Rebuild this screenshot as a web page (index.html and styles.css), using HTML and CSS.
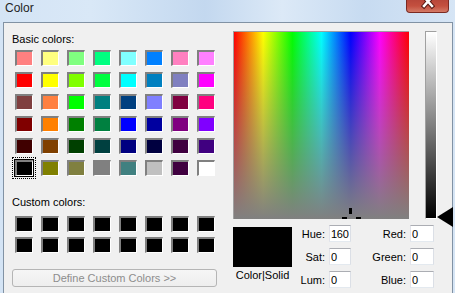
FILE: index.html
```html
<!DOCTYPE html>
<html>
<head>
  <meta charset="UTF-8">
  <link rel="stylesheet" href="styles.css">
</head>
<body>
  <div class="window">
    <div class="titlebar">
      <span class="title">Color</span>
      <div class="close-button">
        <svg width="43" height="13" viewBox="0 0 43 13">
          <path d="M18 -3 L26 6 M26 -3 L18 6" stroke="#5a1a14" stroke-width="4.5" stroke-linecap="square"/>
          <path d="M18 -3 L26 6 M26 -3 L18 6" stroke="#ffffff" stroke-width="2.5" stroke-linecap="square"/>
        </svg>
      </div>
    </div>

    <div class="client">
      <div class="left-panel">
        <div class="label">Basic colors:</div>
        <div class="swatch-grid basic">
          <div class="swatch" style="background:#ff8080"></div>
          <div class="swatch" style="background:#ffff80"></div>
          <div class="swatch" style="background:#80ff80"></div>
          <div class="swatch" style="background:#00ff80"></div>
          <div class="swatch" style="background:#80ffff"></div>
          <div class="swatch" style="background:#0080ff"></div>
          <div class="swatch" style="background:#ff80c0"></div>
          <div class="swatch" style="background:#ff80ff"></div>

          <div class="swatch" style="background:#ff0000"></div>
          <div class="swatch" style="background:#ffff00"></div>
          <div class="swatch" style="background:#80ff00"></div>
          <div class="swatch" style="background:#00ff40"></div>
          <div class="swatch" style="background:#00ffff"></div>
          <div class="swatch" style="background:#0080c0"></div>
          <div class="swatch" style="background:#8080c0"></div>
          <div class="swatch" style="background:#ff00ff"></div>

          <div class="swatch" style="background:#804040"></div>
          <div class="swatch" style="background:#ff8040"></div>
          <div class="swatch" style="background:#00ff00"></div>
          <div class="swatch" style="background:#008080"></div>
          <div class="swatch" style="background:#004080"></div>
          <div class="swatch" style="background:#8080ff"></div>
          <div class="swatch" style="background:#800040"></div>
          <div class="swatch" style="background:#ff0080"></div>

          <div class="swatch" style="background:#800000"></div>
          <div class="swatch" style="background:#ff8000"></div>
          <div class="swatch" style="background:#008000"></div>
          <div class="swatch" style="background:#008040"></div>
          <div class="swatch" style="background:#0000ff"></div>
          <div class="swatch" style="background:#0000a0"></div>
          <div class="swatch" style="background:#800080"></div>
          <div class="swatch" style="background:#8000ff"></div>

          <div class="swatch" style="background:#400000"></div>
          <div class="swatch" style="background:#804000"></div>
          <div class="swatch" style="background:#004000"></div>
          <div class="swatch" style="background:#004040"></div>
          <div class="swatch" style="background:#000080"></div>
          <div class="swatch" style="background:#000040"></div>
          <div class="swatch" style="background:#400040"></div>
          <div class="swatch" style="background:#400080"></div>

          <div class="swatch selected" style="background:#000000"></div>
          <div class="swatch" style="background:#808000"></div>
          <div class="swatch" style="background:#808040"></div>
          <div class="swatch" style="background:#808080"></div>
          <div class="swatch" style="background:#408080"></div>
          <div class="swatch" style="background:#c0c0c0"></div>
          <div class="swatch" style="background:#400040"></div>
          <div class="swatch" style="background:#ffffff"></div>
        </div>

        <div class="label custom-label">Custom colors:</div>
        <div class="swatch-grid custom">
          <div class="swatch"></div><div class="swatch"></div><div class="swatch"></div><div class="swatch"></div>
          <div class="swatch"></div><div class="swatch"></div><div class="swatch"></div><div class="swatch"></div>
          <div class="swatch"></div><div class="swatch"></div><div class="swatch"></div><div class="swatch"></div>
          <div class="swatch"></div><div class="swatch"></div><div class="swatch"></div><div class="swatch"></div>
        </div>

        <button class="define-button" disabled>Define Custom Colors &gt;&gt;</button>
      </div>

      <div class="right-panel">
        <div class="picker">
          <div class="spectrum">
            <div class="cross cross-top"></div>
            <div class="cross cross-left"></div>
            <div class="cross cross-right"></div>
          </div>
          <div class="lum-bar">
            <div class="lum-arrow"></div>
          </div>
        </div>

        <div class="bottom-row">
          <div class="preview">
            <div class="preview-box"></div>
            <div class="preview-caption">Color|Solid</div>
          </div>
          <div class="fields">
            <label>Hue:</label><input type="text" value="160">
            <label>Red:</label><input type="text" value="0">
            <label>Sat:</label><input type="text" value="0">
            <label>Green:</label><input type="text" value="0">
            <label>Lum:</label><input type="text" value="0">
            <label>Blue:</label><input type="text" value="0">
          </div>
        </div>
      </div>
    </div>
  </div>
</body>
</html>
```

FILE: styles.css
```css
body {
  margin: 0;
  width: 455px;
  height: 293px;
  overflow: hidden;
  font-family: "Liberation Sans", Arial, sans-serif;
  font-size: 11px;
  color: #000;
}

.window {
  width: 455px;
  height: 293px;
  background: linear-gradient(to right, #d4e4f5 0%, #d9e8f7 20%, #c3d8ef 45%, #dce9f7 62%, #c7dbf1 80%, #d6e5f5 100%);
}

.titlebar {
  height: 22px;
  display: flex;
  align-items: flex-start;
}

.title {
  padding-left: 5px;
  font-size: 12px;
  line-height: 16px;
  color: #1e1e1e;
}

.close-button {
  margin-left: auto;
  margin-right: 6px;
  width: 43px;
  height: 13px;
  box-sizing: border-box;
  border: 1px solid #7b2a22;
  border-top: none;
  border-radius: 0 0 4px 4px;
  background: linear-gradient(to bottom, #b8473a 0%, #c4503f 50%, #d47a66 100%);
  overflow: hidden;
}

.close-button svg {
  display: block;
  margin-left: -1px;
}

.client {
  margin-left: 3px;
  width: 450px;
  height: 271px;
  box-sizing: border-box;
  border: 1px solid #8192a4;
  border-bottom: none;
  background: #f0f0f0;
  display: flex;
}

.left-panel {
  width: 229px;
  padding: 9px 0 0 8px;
  box-sizing: border-box;
  display: flex;
  flex-direction: column;
}

.label {
  line-height: 14px;
  margin-bottom: 4px;
}

.custom-label {
  margin-top: 19px;
  margin-bottom: 7px;
}

.swatch-grid {
  display: grid;
  grid-template-columns: repeat(8, 18px);
  column-gap: 8px;
  margin-left: 3px;
}

.swatch-grid.basic {
  grid-auto-rows: 16px;
  row-gap: 6px;
}

.swatch-grid.custom {
  grid-auto-rows: 16px;
  row-gap: 5px;
}

.swatch {
  box-sizing: border-box;
  background: #000;
  border-style: solid;
  border-width: 2px 1px 1px 2px;
  border-color: #808080 #ffffff #ffffff #808080;
}

.swatch.selected {
  box-shadow: 0 0 0 1px #000;
  outline: 1px dotted #000;
  outline-offset: 2px;
}

.define-button {
  margin-top: 16px;
  width: 205px;
  height: 18px;
  padding: 0;
  border: 1px solid #b5b5b5;
  border-radius: 3px;
  background: linear-gradient(to bottom, #f6f6f6, #eeeeee);
  color: #8d8d8d;
  font-family: "Liberation Sans", Arial, sans-serif;
  font-size: 11px;
  line-height: 16px;
}

.right-panel {
  padding-top: 8px;
  display: flex;
  flex-direction: column;
}

.picker {
  display: flex;
  gap: 16px;
}

.spectrum {
  position: relative;
  width: 176px;
  height: 188px;
  box-sizing: border-box;
  border-top: 1px solid #a0a0a0;
  border-left: 1px solid #a0a0a0;
  overflow: hidden;
  background:
    linear-gradient(to bottom, rgba(128, 128, 128, 0), #808080),
    linear-gradient(to right, #ff0000 0%, #ffff00 16.67%, #00ff00 33.33%, #00ffff 50%, #0000ff 66.67%, #ff00ff 83.33%, #ff0000 100%);
}

.cross {
  position: absolute;
  background: #000;
}

.cross-top {
  left: 115px;
  top: 176px;
  width: 3px;
  height: 6px;
}

.cross-left {
  left: 108px;
  top: 185px;
  width: 5px;
  height: 3px;
}

.cross-right {
  left: 122px;
  top: 185px;
  width: 5px;
  height: 3px;
}

.lum-bar {
  position: relative;
  width: 12px;
  height: 188px;
  box-sizing: border-box;
  border-style: solid;
  border-width: 1px;
  border-color: #a0a0a0 #ffffff #ffffff #a0a0a0;
  background: linear-gradient(to bottom, #ffffff, #000000);
}

.lum-arrow {
  position: absolute;
  left: 11px;
  top: 175px;
  width: 0;
  height: 0;
  border-top: 10px solid transparent;
  border-bottom: 10px solid transparent;
  border-right: 16px solid #000;
}

.bottom-row {
  display: flex;
  margin-top: 6px;
}

.preview {
  width: 59px;
  margin-top: 2px;
}

.preview-box {
  height: 40px;
  background: #000;
}

.preview-caption {
  text-align: center;
  line-height: 13px;
  margin-top: 2px;
  white-space: nowrap;
}

.fields {
  margin-left: 4px;
  display: grid;
  grid-template-columns: 33px 22px 59px 24px;
  grid-auto-rows: 17px;
  row-gap: 6px;
}

.fields label {
  text-align: right;
  padding-right: 4px;
  line-height: 19px;
}

.fields input {
  width: 100%;
  height: 17px;
  box-sizing: border-box;
  margin: 0;
  padding: 0 0 0 1px;
  border: 1px solid;
  border-color: #abadb3 #dbdfe6 #e3e9ef #e2e3ea;
  background: #fff;
  font-family: "Liberation Sans", Arial, sans-serif;
  font-size: 11px;
  letter-spacing: -0.3px;
  color: #000;
}
```
